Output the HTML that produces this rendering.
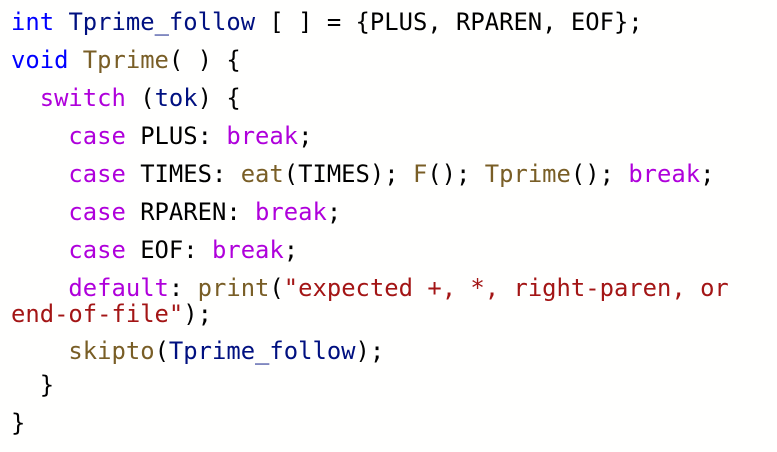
<!DOCTYPE html>
<html><head><style>
body{margin:0;width:777px;height:452px;background:#fffffe;overflow:hidden;position:relative;font-family:"DejaVu Sans Mono","Liberation Mono",monospace;font-size:23.85px;color:#000}
.l{position:absolute;left:11px;line-height:28px;white-space:pre}
.k{color:#0000ff}.v{color:#001080}.f{color:#795e26}.c{color:#af00db}.s{color:#a31515}
</style></head><body>
<div class="l" style="top:8px"><span class="k">int</span> <span class="v">Tprime_follow</span> [ ] = {PLUS, RPAREN, EOF};</div>
<div class="l" style="top:46px"><span class="k">void</span> <span class="f">Tprime</span>( ) {</div>
<div class="l" style="top:84px">  <span class="c">switch</span> (<span class="v">tok</span>) {</div>
<div class="l" style="top:122px">    <span class="c">case</span> PLUS: <span class="c">break</span>;</div>
<div class="l" style="top:160px">    <span class="c">case</span> TIMES: <span class="f">eat</span>(TIMES); <span class="f">F</span>(); <span class="f">Tprime</span>(); <span class="c">break</span>;</div>
<div class="l" style="top:198px">    <span class="c">case</span> RPAREN: <span class="c">break</span>;</div>
<div class="l" style="top:236px">    <span class="c">case</span> EOF: <span class="c">break</span>;</div>
<div class="l" style="top:274px">    <span class="c">default</span>: <span class="f">print</span>(<span class="s">"expected +, *, right-paren, or</span></div>
<div class="l" style="top:300px"><span class="s">end-of-file"</span>);</div>
<div class="l" style="top:337px">    <span class="f">skipto</span>(<span class="v">Tprime_follow</span>);</div>
<div class="l" style="top:371px">  }</div>
<div class="l" style="top:409px">}</div>
</body></html>
